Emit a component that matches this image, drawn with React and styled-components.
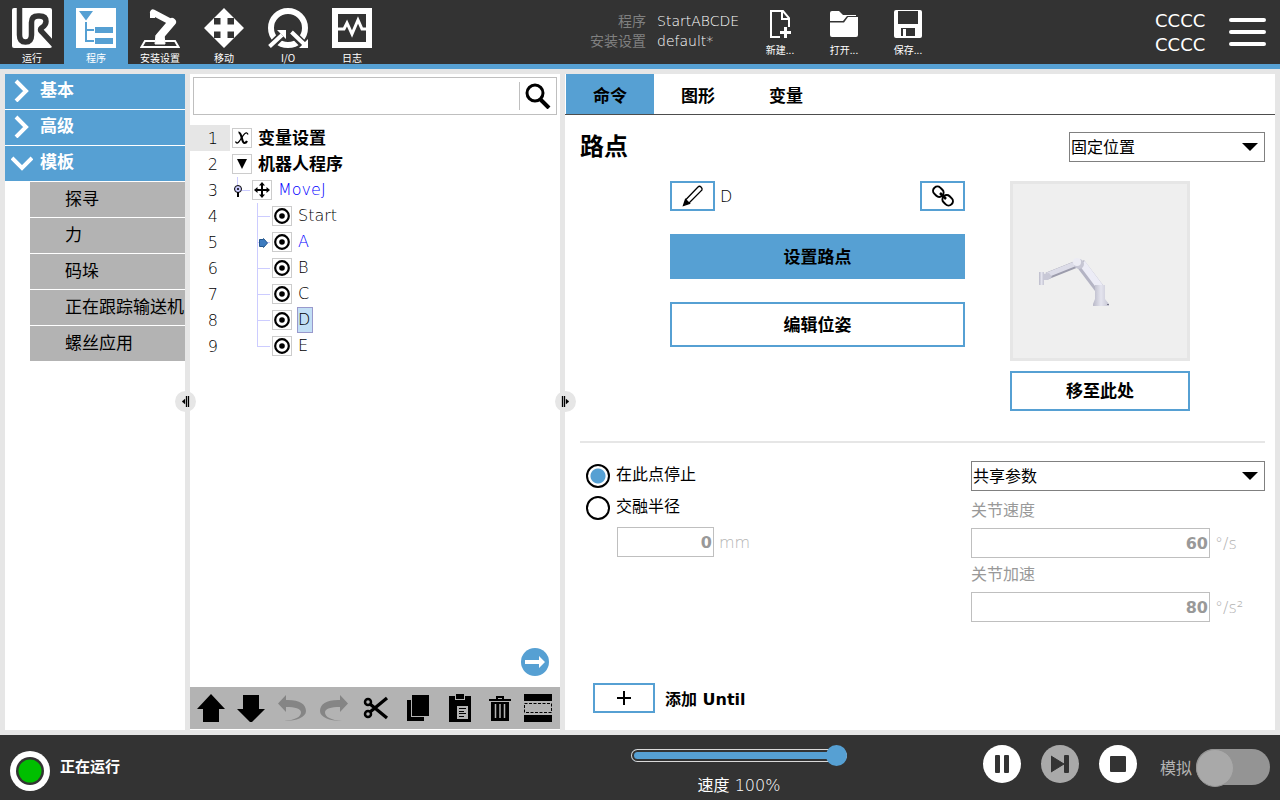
import React from 'react'
import styled, { createGlobalStyle } from 'styled-components'

const blue = '#56a0d3'
const dark = '#333333'
const line = '#e6e6e6'

const boldFont = `'DejaVu Sans', 'Noto Sans CJK SC', sans-serif`

const GlobalStyle = createGlobalStyle`
  * {
    box-sizing: border-box;
  }
  body {
    margin: 0;
    background: ${line};
    color: #000;
    font-family: 'DejaVu Sans Light', 'DejaVu Sans', 'Noto Sans CJK SC', sans-serif;
    font-size: 16px;
    font-weight: 400;
  }
  button, input, select {
    font: inherit;
    color: inherit;
    margin: 0;
  }
  button {
    display: flex;
    align-items: center;
    justify-content: center;
    padding: 0;
    border: 0;
    background: none;
    cursor: pointer;
  }
  svg {
    display: block;
    flex-shrink: 0;
  }
`

const Page = styled.div`
  display: flex;
  flex-direction: column;
  min-height: 100vh;
`

/* ---------- header ---------- */

const Header = styled.header`
  display: flex;
  align-items: center;
  height: 69px;
  background: ${dark};
  border-bottom: 5px solid ${blue};
  color: #fff;
`

const Nav = styled.nav`
  display: flex;
`

const NavButton = styled.button`
  flex-direction: column;
  justify-content: flex-start;
  width: 64px;
  height: 64px;
  padding-top: 8px;
  gap: 3px;
  font-size: 10px;
  line-height: 14px;
  font-family: 'Noto Sans CJK SC', sans-serif;
  background: ${props => (props.$active ? blue : 'transparent')};
`

const FileInfo = styled.dl`
  display: grid;
  grid-template-columns: 56px 91px;
  column-gap: 11px;
  margin: 0 0 0 auto;
  padding-bottom: 2px;
  font-size: 14px;
  line-height: 20px;

  dt {
    color: #808080;
    text-align: right;
    white-space: nowrap;
  }
  dd {
    margin: 0;
  }
`

const FileActions = styled.div`
  display: flex;
  margin-right: 9px;
`

const FileButton = styled(NavButton)`
  padding-top: 9px;
  gap: 4px;
`

const Checksum = styled.div`
  width: 74px;
  margin-left: auto;
  padding-top: 2px;
  font-size: 18px;
  line-height: 24px;
  font-family: 'DejaVu Sans', sans-serif;
`

const MenuButton = styled.button`
  margin-right: 14px;
`

/* ---------- layout ---------- */

const Main = styled.main`
  flex: 1;
  display: grid;
  grid-template-columns: 180px 370px minmax(0, 1fr);
  gap: 5px;
  padding: 5px;
`

const Panel = styled.section`
  position: relative;
  display: flex;
  flex-direction: column;
  background: #fff;
`

const Handle = styled.button`
  position: absolute;
  z-index: 1;
  top: 50%;
  right: ${props => props.$right}px;
  width: 21px;
  height: 21px;
  margin-top: -11px;
  border-radius: 50%;
  background: ${line};
`

/* ---------- sidebar ---------- */

const Group = styled.button`
  justify-content: flex-start;
  width: 100%;
  height: 36px;
  padding: 0 0 4px 6px;
  gap: 7px;
  color: #fff;
  font-size: 17px;
  line-height: 20px;
  font-weight: 700;
  background: ${blue};
  border-bottom: 1px solid #fff;
`

const Item = styled.button`
  justify-content: flex-start;
  height: 36px;
  margin-left: 25px;
  padding: 0 0 4px 35px;
  font-size: 17px;
  white-space: nowrap;
  background: #b3b3b3;
  border-bottom: 1px solid #fff;
`

/* ---------- program tree ---------- */

const Search = styled.div`
  display: flex;
  align-items: center;
  height: 38px;
  margin: 3px 3px 10px;
  border: 1px solid #bfbfbf;

  input {
    flex: 1;
    min-width: 0;
    height: 28px;
    padding: 0 8px;
    border: 0;
    border-right: 1px solid #bfbfbf;
    outline: 0;
  }
  button {
    width: 36px;
    height: 36px;
  }
`

const Tree = styled.ol`
  flex: 1;
  margin: 0;
  padding: 0;
  list-style: none;
`

const Row = styled.li`
  display: flex;
  align-items: center;
  height: 26px;
`

const LineNo = styled.span`
  width: 40px;
  height: 26px;
  margin-right: 2px;
  padding-right: 12px;
  line-height: 28px;
  text-align: right;
  background: ${props => (props.$active ? line : 'transparent')};
`

const NodeIcon = styled.span`
  display: flex;
  align-items: center;
  justify-content: center;
  width: 20px;
  height: 20px;
  border: 1px solid #ccc;
`

const NodeLabel = styled.span`
  height: 26px;
  margin-left: 5px;
  padding-right: ${props => (props.$selected ? 2 : 0)}px;
  line-height: 24px;
  border: 1px solid ${props => (props.$selected ? '#9999cc' : 'transparent')};
  background: ${props => (props.$selected ? '#c2dff5' : 'transparent')};
  color: ${props => (props.$running ? '#0000ff' : '#000')};
  font-weight: ${props => (props.$bold ? 700 : 'inherit')};
  font-size: ${props => (props.$bold ? 17 : 16)}px;
`

const WaypointGuide = styled.span`
  padding-left: 20px;
`

const GotoRow = styled.div`
  display: flex;
  justify-content: flex-end;
  padding: 0 11px 11px;
`

const Toolbar = styled.div`
  display: flex;
  height: 42px;
  margin-bottom: 1px;
  padding-left: 1px;
  background: #b3b3b3;
`

const ToolButton = styled.button`
  width: ${props => props.$width}px;
`

/* ---------- command panel ---------- */

const Tabs = styled.div`
  display: flex;
  height: 41px;
  padding-left: 1px;
  border-bottom: 1px solid #4d4d4d;
`

const Tab = styled.button`
  min-width: 88px;
  padding: 0 20px;
  font-size: 17px;
  font-weight: 700;
  background: ${props => (props.$active ? blue : 'transparent')};
`

const Content = styled.div`
  flex: 1;
  display: flex;
  flex-direction: column;
  padding: 17px 10px 17px 15px;
`

const TitleRow = styled.div`
  display: flex;
  justify-content: space-between;
  margin-bottom: 19px;

  h1 {
    margin: 0;
    font-size: 24px;
    line-height: 30px;
    font-weight: 700;
  }
`

const SelectBox = styled.div`
  position: relative;
  width: ${props => props.$width};

  select {
    display: block;
    width: 100%;
    height: 30px;
    padding: 0 30px 0 1px;
    appearance: none;
    background: #fff;
    border: 1px solid #808080;
    border-radius: 0;
  }
  svg {
    position: absolute;
    top: 11px;
    right: 7px;
    pointer-events: none;
  }
`

const Waypoint = styled.div`
  display: grid;
  grid-template-columns: minmax(0, 1fr) 180px;
  gap: 45px;
  padding: 0 75px 30px 90px;
  border-bottom: 2px solid ${line};
`

const Stack = styled.div`
  display: flex;
  flex-direction: column;
  gap: ${props => props.$gap}px;
`

const NameRow = styled.div`
  display: flex;
  align-items: center;
  gap: 5px;

  span {
    flex: 1;
  }
`

const OutlineButton = styled.button`
  width: ${props => props.$width || '100%'};
  height: ${props => props.$height || 30}px;
  padding-bottom: ${props => (props.$height ? 3 : 0)}px;
  border: 2px solid ${blue};
  background: ${props => (props.$filled ? blue : '#fff')};
  font-size: 17px;
  font-weight: 700;
`

const Preview = styled.div`
  height: 180px;
  border: 3px solid ${line};
  background: #efefef;
`

const Params = styled.div`
  display: flex;
  justify-content: space-between;
  padding-top: 17px;
`

const RadioList = styled.div`
  display: flex;
  flex-direction: column;
  padding-left: 6px;
`

const RadioLabel = styled.label`
  display: flex;
  align-items: center;
  gap: 6px;
  height: 32px;
  line-height: 20px;

  span {
    padding-bottom: 2px;
  }
`

const Radio = styled.input`
  appearance: none;
  width: 24px;
  height: 24px;
  border: 2px solid #000;
  border-radius: 50%;
  background: #fff;

  &:checked {
    background: radial-gradient(circle, ${blue} 7px, #fff 8px);
  }
`

const Field = styled.div`
  display: flex;
  align-items: center;
  gap: 5px;
  color: #b3b3b3;

  input {
    width: ${props => props.$width}px;
    height: 30px;
    padding: 0 1px;
    border: 1px solid #bfbfbf;
    background: #fff;
    color: #999;
    font-weight: 700;
    font-family: ${boldFont};
    text-align: right;
  }
`

const RadiusField = styled(Field)`
  margin: 3px 0 0 31px;
`

const ParamList = styled.div`
  display: flex;
  flex-direction: column;
  width: 294px;
  padding-top: 1px;
`

const ParamLabel = styled.label`
  height: 34px;
  line-height: 34px;
  color: #999;

  &:first-of-type {
    margin-top: 3px;
  }
`

const UntilRow = styled.div`
  display: flex;
  align-items: center;
  gap: 10px;
  margin-top: auto;
  padding-left: 13px;
  font-weight: 700;
  font-family: ${boldFont};
`

/* ---------- footer ---------- */

const Footer = styled.footer`
  display: flex;
  align-items: flex-start;
  height: 65px;
  padding: 0 10px;
  background: ${dark};
  color: #fff;
`

const Status = styled.div`
  display: flex;
  gap: 10px;
  margin-right: auto;
  padding-top: 16px;
  font-size: 15px;
  line-height: 32px;
  font-weight: 700;
`

const Speed = styled.div`
  display: flex;
  flex-direction: column;
  align-items: center;
  gap: 10px;
  width: 216px;
  margin-right: 136px;
  padding-top: 10px;
  line-height: 20px;
`

const Slider = styled.input`
  appearance: none;
  display: block;
  width: 100%;
  height: 21px;
  background: none;

  &::-webkit-slider-runnable-track {
    height: 13px;
    border-radius: 7px;
    background: ${blue};
    box-shadow: inset 0 0 0 1px #d9d9d9, inset 0 0 0 3px ${dark};
  }
  &::-webkit-slider-thumb {
    appearance: none;
    width: 21px;
    height: 21px;
    margin-top: -4px;
    border-radius: 50%;
    background: ${blue};
  }
`

const Controls = styled.div`
  display: flex;
  gap: 20px;
  padding-top: 10px;
`

const RoundButton = styled.button`
  width: 38px;
  height: 38px;
  border-radius: 50%;
  background: ${props => (props.disabled ? '#a9a9a9' : '#fff')};
`

const Simulation = styled.label`
  display: flex;
  align-items: center;
  gap: 4px;
  margin-left: 23px;
  padding-top: 14px;
  color: #b3b3b3;
`

const Switch = styled.input`
  appearance: none;
  display: flex;
  width: 74px;
  height: 36px;
  border-radius: 18px;
  background: #949494;

  &::before {
    content: '';
    width: 36px;
    height: 36px;
    border: 1px solid #949494;
    border-radius: 50%;
    background: #a9a9a9;
  }
`

/* ---------- icons ---------- */

const RunIcon = () => (
  <svg width="40" height="40" viewBox="0 0 40 40" fill="none">
    <rect width="40" height="40" rx="2" fill="#fff" />
    <path d="M7.500 0V27q0 7 6 7t6-7V14.500q0-6.500 6.500-6.500h1.500q6.500 0 6.500 5.500 0 3.500-4.500 6.500 -2 1.500 0 3.500L42 37" stroke={dark} strokeWidth="5.500" />
  </svg>
)

const ProgramIcon = () => (
  <svg width="40" height="40" viewBox="0 0 40 40" fill={blue}>
    <rect width="40" height="40" fill="#fff" />
    <path d="M3 3h14L10 12.500zM9 14h2v7h7v2h-7v9h7v2H9zM19 19h18v6H19zM19 30h18v6H19z" />
  </svg>
)

const InstallIcon = () => (
  <svg width="40" height="40" viewBox="0 0 40 40" fill="none" stroke="#fff">
    <path d="M15 33H5l-3.500 6h37L35 33H25" strokeWidth="2" />
    <path d="M13 4.500L31 14" strokeWidth="6" strokeLinecap="round" />
    <path d="M32 14L20 28" strokeWidth="8" strokeLinecap="round" />
    <path d="M12.500 4v6" strokeWidth="5" />
    <path d="M16 27h8l1 9H15z" fill="#fff" strokeWidth="1" />
  </svg>
)

const MoveIcon = () => (
  <svg width="40" height="40" viewBox="0 0 40 40" fill="#fff">
    <path d="M20 0l10 10h-6.500v6.500H30V10l10 10-10 10v-6.500h-6.500V30H30L20 40 10 30h6.500v-6.500H10V30L0 20l10-10v6.500h6.500V10H10z" />
  </svg>
)

const IoIcon = () => (
  <svg width="40" height="40" viewBox="0 0 40 40" fill="none">
    <circle cx="20" cy="20" r="17" stroke="#fff" strokeWidth="6" />
    <path d="M0 41L18 23M22 23l18 18" stroke={dark} strokeWidth="8" />
    <path d="M1.500 38.500L14 27M23.500 24L36 36" stroke="#fff" strokeWidth="4" />
    <path d="M9 22h9v9zM40 31v9h-9z" fill="#fff" />
  </svg>
)

const LogIcon = () => (
  <svg width="40" height="40" viewBox="0 0 40 40" fill="none">
    <path d="M3 3h34v34H3z" stroke="#fff" strokeWidth="6" />
    <path d="M5 21h7l3-6 5 11 6-14 4 9h5" stroke="#fff" strokeWidth="3" />
  </svg>
)

const NewIcon = () => (
  <svg width="30" height="30" viewBox="0 0 30 30" fill="none" stroke="#fff" strokeWidth="2">
    <path d="M15 28H6V2h12l6 7v9M17 2v8h7" />
    <path d="M20.500 18v11M15 23.500h11" strokeWidth="3" />
  </svg>
)

const OpenIcon = () => (
  <svg width="30" height="30" viewBox="0 0 30 30" fill="#fff">
    <path d="M1 4q0-2 2-2h7l4 4h13v1H18l-4 5H1z" />
    <path d="M1 13.500h14l4-5.500h10v18q0 2-2 2H3q-2 0-2-2z" />
  </svg>
)

const SaveIcon = () => (
  <svg width="30" height="30" viewBox="0 0 30 30">
    <rect x="1" y="1" width="28" height="28" rx="2" fill="#fff" />
    <path d="M5 2h20v13H5zM8 19h14v8H8z" fill={dark} />
    <path d="M10 20h3v7h-3z" fill="#fff" />
  </svg>
)

const MenuIcon = () => (
  <svg width="37" height="30" viewBox="0 0 37 30" stroke="#fff" strokeWidth="4" strokeLinecap="round">
    <path d="M2 3h33M2 15h33M2 27h33" />
  </svg>
)

const Chevron = ({ open }) => (
  <svg width="22" height="24" viewBox="0 0 22 24" fill="none" stroke="#fff" strokeWidth="4">
    <path d={open ? 'M1 8l10 10L21 8' : 'M5 3l10 10L5 23'} />
  </svg>
)

const SearchIcon = () => (
  <svg width="26" height="26" viewBox="0 0 26 26" fill="none" stroke="#000" strokeWidth="3">
    <circle cx="10" cy="10" r="8" />
    <path d="M15.500 16.500L24 25" strokeWidth="4" />
  </svg>
)

const HandleIcon = ({ flip }) => (
  <svg width="9" height="11" viewBox="0 0 9 11">
    <path
      d={flip ? 'M1 0h1v11H1zM3 0h1v11H3zM5 3l3 2.500L5 8z' : 'M7 0h1v11H7zM5 0h1v11H5zM4 3L1 5.500 4 8z'}
      stroke="#000"
      strokeWidth="0.300"
    />
  </svg>
)

const TargetIcon = () => (
  <svg width="16" height="16" viewBox="0 0 16 16" fill="none">
    <circle cx="8" cy="8" r="6.800" stroke="#000" strokeWidth="2.200" />
    <circle cx="8" cy="8" r="2.800" fill="#000" />
  </svg>
)

const MoveNodeIcon = () => (
  <svg width="16" height="16" viewBox="0 0 16 16">
    <path d="M8 0l3 3.500H9V7h3.500V5L16 8l-3.500 3V9H9v3.500h2L8 16l-3-3.500h2V9H3.500v2L0 8l3.500-3v2H7V3.500H5z" />
  </svg>
)

const VariableIcon = () => (
  <svg width="16" height="16" viewBox="0 0 16 16" fill="none" stroke="#000">
    <path d="M4.500 2.500C8 2 7.500 13 10.500 13q1.500 0 2.500-2" strokeWidth="2.200" />
    <path d="M14 4.500C12.500 0 9 5.500 7.500 8S3 15.500 1.500 11.500" strokeWidth="1.300" />
  </svg>
)

const TriangleIcon = () => (
  <svg width="10" height="10" viewBox="0 0 10 10">
    <path d="M0 0h10L5 10z" />
  </svg>
)

const MoveGuide = () => (
  <svg width="20" height="26" viewBox="0 0 20 26" fill="none">
    <path d="M5.500 0v8M9 13.500h9" stroke="#ccccff" />
    <circle cx="6" cy="12" r="3.500" fill="#ccccff" stroke="#000" />
    <circle cx="6" cy="12" r="1" fill="#000" />
    <path d="M6 15v5" stroke="#000" strokeWidth="2" />
  </svg>
)

const Guide = ({ last, current }) => (
  <svg width="20" height="26" viewBox="0 0 20 26">
    <path d={`M5.500 0V${last ? 14 : 26}M5 13.500h13`} stroke="#ccccff" fill="none" />
    {current && <path d="M7.500 10.500h4V9.500l4 4.500-4 4.500v-1h-4z" fill="#3d7cc0" stroke="#24588f" />}
  </svg>
)

const GoIcon = () => (
  <svg width="28" height="28" viewBox="0 0 28 28">
    <circle cx="14" cy="14" r="14" fill={blue} />
    <path d="M4 12h14V8l6 6-6 6v-4H4z" fill="#fff" />
  </svg>
)

const UpIcon = () => (
  <svg width="28" height="28" viewBox="0 0 28 28">
    <path d="M14 0l14 15h-6v13H6V15H0z" />
  </svg>
)

const DownIcon = () => (
  <svg width="28" height="28" viewBox="0 0 28 28">
    <path d="M14 29l14-14h-6V1H6v14H0z" />
  </svg>
)

const undoPath = 'M8 1v5C21 5.500 28 10 28 17c0 6-9 10-22 10 11-1 17-4 17-8.500 0-4-6-5.500-15-5.500v5L0 9.500z'

const UndoIcon = () => (
  <svg width="28" height="28" viewBox="0 0 28 28" fill="#858585">
    <path d={undoPath} />
  </svg>
)

const RedoIcon = () => (
  <svg width="28" height="28" viewBox="0 0 28 28" fill="#858585">
    <path d={undoPath} transform="matrix(-1 0 0 1 28 0)" />
  </svg>
)

const CutIcon = () => (
  <svg width="26" height="26" viewBox="0 0 26 26" fill="none" stroke="#000">
    <circle cx="5" cy="7" r="3" strokeWidth="2.500" />
    <circle cx="5" cy="19" r="3" strokeWidth="2.500" />
    <path d="M7 9l17 14M7 17L24 3" strokeWidth="3.300" />
  </svg>
)

const CopyIcon = () => (
  <svg width="26" height="28" viewBox="0 0 26 28">
    <path d="M7 1h17v21H7zM2 6h4v17h13v4H2z" />
  </svg>
)

const PasteIcon = () => (
  <svg width="24" height="28" viewBox="0 0 24 28">
    <path d="M1 2h6v4h10V2h6v26H1zM8 0h8v5H8z" />
    <path d="M9 12h11v13H9z" fill="#b3b3b3" />
    <path d="M11 14.500h7M11 17.500h5M11 19.500h7M11 22.500h5" stroke="#000" />
  </svg>
)

const DeleteIcon = () => (
  <svg width="22" height="26" viewBox="0 0 22 26">
    <path d="M0 4h22v2H0zM7 1h8v3h-2V3H9v1H7zM2 7h18v19H2z" />
    <path d="M6.500 9v14M11 9v14M15.500 9v14" stroke="#b3b3b3" strokeWidth="1.500" />
  </svg>
)

const SuppressIcon = () => (
  <svg width="28" height="28" viewBox="0 0 28 28">
    <path d="M0 0h28v7H0zM0 21h28v7H0z" />
    <rect x="0.500" y="9.500" width="27" height="9" fill="none" stroke="#000" strokeDasharray="3 1.500" />
  </svg>
)

const ArrowDown = () => (
  <svg width="16" height="8" viewBox="0 0 16 8">
    <path d="M0 0h16L8 8z" />
  </svg>
)

const PencilIcon = () => (
  <svg width="22" height="22" viewBox="0 0 22 22" fill="none" stroke="#000" strokeWidth="1.300">
    <path d="M3.500 15L16 2q1.500-1.500 3 0t1 3L7 18" />
    <path d="M1.500 20.500l2-6 4 4z" fill="#000" />
  </svg>
)

const LinkIcon = () => (
  <svg width="22" height="22" viewBox="0 0 22 22" fill="none" stroke="#000" strokeWidth="2">
    <rect x="1" y="2.500" width="11" height="8.500" rx="4" transform="rotate(45 6.500 6.500)" />
    <rect x="10" y="11" width="11" height="8.500" rx="4" transform="rotate(45 15.500 15.500)" />
    <path d="M8 8l6 6" strokeWidth="2.500" />
  </svg>
)

const PlusIcon = () => (
  <svg width="14" height="14" viewBox="0 0 14 14">
    <path d="M6 0h2v6h6v2H8v6H6V8H0V6h6z" />
  </svg>
)

const RobotDrawing = () => (
  <svg width="174" height="174" viewBox="0 0 174 174" fill="none">
    <defs>
      <linearGradient id="tube" x1="0" x2="1">
        <stop offset="0" stopColor="#b9b9c8" />
        <stop offset="0.500" stopColor="#e4e4ee" />
        <stop offset="1" stopColor="#c4c4d2" />
      </linearGradient>
    </defs>
    <path d="M34 92L64 80" stroke="#9c9cac" strokeWidth="7" />
    <path d="M34 91L64 79" stroke="#dcdce8" strokeWidth="5" />
    <path d="M67 79L86 104" stroke="#b4b4c4" strokeWidth="10" />
    <path d="M69 79L87 103" stroke="#ececf6" strokeWidth="7" />
    <circle cx="66" cy="80" r="5" fill="#c6c6d4" />
    <circle cx="64" cy="78" r="4" fill="#ececf4" />
    <path d="M26 88h5v13h-5z" fill="url(#tube)" />
    <path d="M30 90l6-1 3 4-4 3h-5z" fill="#c8c8d6" />
    <path d="M82 101h10v14l4 5v2H80v-2l2-5z" fill="url(#tube)" />
    <path d="M94 120.500h2" stroke="#777788" />
  </svg>
)

const StatusIcon = () => (
  <svg width="40" height="40" viewBox="0 0 40 40">
    <circle cx="20" cy="20" r="20" fill="#fff" />
    <circle cx="20" cy="20" r="14" fill={dark} />
    <circle cx="20" cy="20" r="11.500" fill="#00bf00" />
  </svg>
)

const PauseIcon = () => (
  <svg width="14" height="18" viewBox="0 0 14 18" fill={dark}>
    <rect width="5" height="18" rx="1" />
    <rect x="9" width="5" height="18" rx="1" />
  </svg>
)

const StepIcon = () => (
  <svg width="18" height="18" viewBox="0 0 18 18" fill={dark}>
    <path d="M0 1l13 8-13 8z" stroke={dark} />
    <rect x="13" width="5" height="18" rx="1" />
  </svg>
)

const StopIcon = () => (
  <svg width="16" height="16" viewBox="0 0 16 16" fill={dark}>
    <rect width="16" height="16" rx="1" />
  </svg>
)

/* ---------- data ---------- */

const navItems = [
  { label: '运行', Icon: RunIcon },
  { label: '程序', Icon: ProgramIcon, active: true },
  { label: '安装设置', Icon: InstallIcon },
  { label: '移动', Icon: MoveIcon },
  { label: 'I/O', Icon: IoIcon },
  { label: '日志', Icon: LogIcon },
]

const fileItems = [
  { label: '新建...', Icon: NewIcon },
  { label: '打开...', Icon: OpenIcon },
  { label: '保存...', Icon: SaveIcon },
]

const templates = ['探寻', '力', '码垛', '正在跟踪输送机', '螺丝应用']

const waypoints = ['Start', 'A', 'B', 'C', 'D', 'E']

const tools = [
  { label: '上移', Icon: UpIcon, width: 40 },
  { label: '下移', Icon: DownIcon, width: 40 },
  { label: '撤消', Icon: UndoIcon, width: 42 },
  { label: '重做', Icon: RedoIcon, width: 42 },
  { label: '剪切', Icon: CutIcon, width: 42 },
  { label: '复制', Icon: CopyIcon, width: 42 },
  { label: '粘贴', Icon: PasteIcon, width: 42 },
  { label: '删除', Icon: DeleteIcon, width: 38 },
  { label: '抑制', Icon: SuppressIcon, width: 38 },
]

function TopBar() {
  return (
    <Header>
      <Nav>
        {navItems.map(({ label, Icon, active }) => (
          <NavButton key={label} $active={active}>
            <Icon />
            {label}
          </NavButton>
        ))}
      </Nav>
      <FileInfo>
        <dt>程序</dt>
        <dd>StartABCDE</dd>
        <dt>安装设置</dt>
        <dd>default*</dd>
      </FileInfo>
      <FileActions>
        {fileItems.map(({ label, Icon }) => (
          <FileButton key={label}>
            <Icon />
            {label}
          </FileButton>
        ))}
      </FileActions>
      <Checksum>
        <div>CCCC</div>
        <div>CCCC</div>
      </Checksum>
      <MenuButton aria-label="菜单"><MenuIcon /></MenuButton>
    </Header>
  )
}

function Sidebar() {
  return (
    <Panel>
      <Group><Chevron />基本</Group>
      <Group><Chevron />高级</Group>
      <Group><Chevron open />模板</Group>
      {templates.map(name => <Item key={name}>{name}</Item>)}
      <Handle $right={-11} aria-label="收起"><HandleIcon /></Handle>
    </Panel>
  )
}

function ProgramTree() {
  const [selected, setSelected] = React.useState('D')

  return (
    <Panel>
      <Search>
        <input type="text" aria-label="搜索" />
        <button aria-label="搜索"><SearchIcon /></button>
      </Search>
      <Tree>
        <Row>
          <LineNo $active>1</LineNo>
          <NodeIcon><VariableIcon /></NodeIcon>
          <NodeLabel $bold>变量设置</NodeLabel>
        </Row>
        <Row>
          <LineNo>2</LineNo>
          <NodeIcon><TriangleIcon /></NodeIcon>
          <NodeLabel $bold>机器人程序</NodeLabel>
        </Row>
        <Row>
          <LineNo>3</LineNo>
          <MoveGuide />
          <NodeIcon><MoveNodeIcon /></NodeIcon>
          <NodeLabel $running>MoveJ</NodeLabel>
        </Row>
        {waypoints.map((name, i) => (
          <Row key={name} onClick={() => setSelected(name)}>
            <LineNo>{i + 4}</LineNo>
            <WaypointGuide>
              <Guide last={i === waypoints.length - 1} current={name === 'A'} />
            </WaypointGuide>
            <NodeIcon><TargetIcon /></NodeIcon>
            <NodeLabel $running={name === 'A'} $selected={name === selected}>{name}</NodeLabel>
          </Row>
        ))}
      </Tree>
      <GotoRow>
        <button aria-label="转到"><GoIcon /></button>
      </GotoRow>
      <Toolbar>
        {tools.map(({ label, Icon, width }) => (
          <ToolButton key={label} $width={width} aria-label={label}><Icon /></ToolButton>
        ))}
      </Toolbar>
      <Handle $right={-16} aria-label="展开"><HandleIcon flip /></Handle>
    </Panel>
  )
}

function CommandPanel() {
  const [stop, setStop] = React.useState(true)

  return (
    <Panel>
      <Tabs>
        <Tab $active>命令</Tab>
        <Tab>图形</Tab>
        <Tab>变量</Tab>
      </Tabs>
      <Content>
        <TitleRow>
          <h1>路点</h1>
          <SelectBox $width="196px">
            <select aria-label="位置类型"><option>固定位置</option></select>
            <ArrowDown />
          </SelectBox>
        </TitleRow>
        <Waypoint>
          <Stack $gap={23}>
            <NameRow>
              <OutlineButton $width="45px" aria-label="重命名"><PencilIcon /></OutlineButton>
              <span>D</span>
              <OutlineButton $width="45px" aria-label="链接"><LinkIcon /></OutlineButton>
            </NameRow>
            <OutlineButton $height={45} $filled>设置路点</OutlineButton>
            <OutlineButton $height={45}>编辑位姿</OutlineButton>
          </Stack>
          <Stack $gap={10}>
            <Preview><RobotDrawing /></Preview>
            <OutlineButton $height={40}>移至此处</OutlineButton>
          </Stack>
        </Waypoint>
        <Params>
          <RadioList>
            <RadioLabel>
              <Radio type="radio" name="blend" checked={stop} onChange={() => setStop(true)} />
              <span>在此点停止</span>
            </RadioLabel>
            <RadioLabel>
              <Radio type="radio" name="blend" checked={!stop} onChange={() => setStop(false)} />
              <span>交融半径</span>
            </RadioLabel>
            <RadiusField $width={97}>
              <input id="radius" type="text" defaultValue="0" aria-label="交融半径" disabled />
              <span>mm</span>
            </RadiusField>
          </RadioList>
          <ParamList>
            <SelectBox $width="100%">
              <select aria-label="参数"><option>共享参数</option></select>
              <ArrowDown />
            </SelectBox>
            <ParamLabel htmlFor="speed">关节速度</ParamLabel>
            <Field $width={239}>
              <input id="speed" type="text" defaultValue="60" disabled />
              <span>°/s</span>
            </Field>
            <ParamLabel htmlFor="acceleration">关节加速</ParamLabel>
            <Field $width={239}>
              <input id="acceleration" type="text" defaultValue="80" disabled />
              <span>°/s²</span>
            </Field>
          </ParamList>
        </Params>
        <UntilRow>
          <OutlineButton $width="62px" aria-labelledby="until"><PlusIcon /></OutlineButton>
          <span id="until">添加 Until</span>
        </UntilRow>
      </Content>
    </Panel>
  )
}

function BottomBar() {
  return (
    <Footer>
      <Status>
        <StatusIcon />
        正在运行
      </Status>
      <Speed>
        <Slider id="speedSlider" type="range" min="0" max="100" defaultValue="100" />
        <label htmlFor="speedSlider">速度 100%</label>
      </Speed>
      <Controls>
        <RoundButton aria-label="暂停"><PauseIcon /></RoundButton>
        <RoundButton aria-label="单步" disabled><StepIcon /></RoundButton>
        <RoundButton aria-label="停止"><StopIcon /></RoundButton>
      </Controls>
      <Simulation>
        模拟
        <Switch type="checkbox" />
      </Simulation>
    </Footer>
  )
}

export default function App() {
  return (
    <Page>
      <GlobalStyle />
      <TopBar />
      <Main>
        <Sidebar />
        <ProgramTree />
        <CommandPanel />
      </Main>
      <BottomBar />
    </Page>
  )
}
